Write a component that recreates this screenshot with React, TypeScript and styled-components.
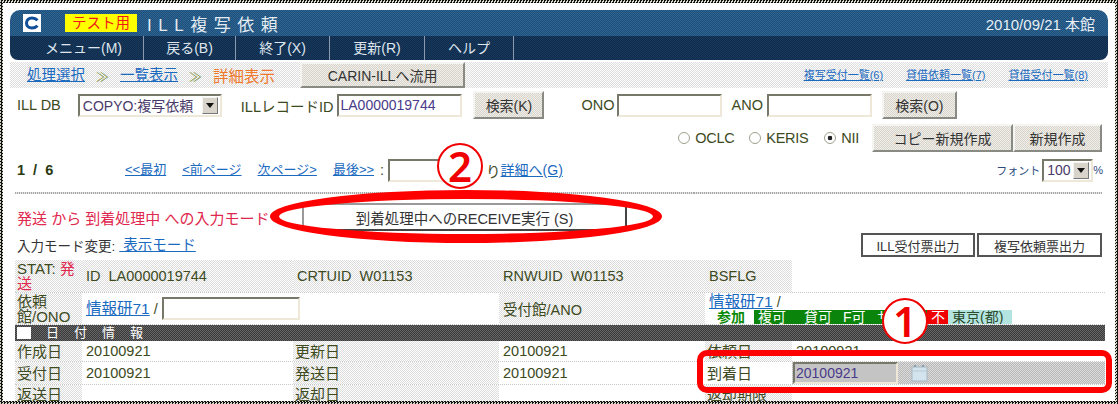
import React from "react";
import styled, { createGlobalStyle } from "styled-components";

const dither = (a: string, b: string) =>
  `repeating-conic-gradient(${a} 0 25%, ${b} 0 50%) 0 0 / 2px 2px`;

const GlobalStyle = createGlobalStyle`
  html, body { margin: 0; padding: 0; background: #fff; }
  body {
    font-family: "Liberation Sans", "Noto Sans CJK JP", sans-serif;
    color: #3d4a1e;
  }
  * { box-sizing: border-box; }
`;

const Frame = styled.div`
  position: relative;
  width: 1118px;
  height: 404px;
  overflow: hidden;
  border: 3px solid transparent;
  padding: 7px 13px 0 12px;
  background:
    linear-gradient(#fff, #fff) padding-box,
    repeating-conic-gradient(#111 0 25%, #d8d8c8 0 50%) 0 0 / 3px 3px border-box;
`;

const Header = styled.header`
  margin: 0 -6px 0 -5px;
  height: 50px;
  border-radius: 10px 10px 8px 8px;
  overflow: hidden;
`;

const TitleBar = styled.div`
  height: 26px;
  display: flex;
  align-items: center;
  padding: 0 10px 0 13px;
  background: ${dither("#1d4f7c", "#2f6590")};
`;

const Logo = styled.svg`
  width: 18px;
  height: 18px;
  flex: none;
`;

const TestTag = styled.span`
  width: 72px;
  height: 18px;
  margin-left: 24px;
  background: #ffff00;
  color: #f01818;
  font-size: 14.5px;
  line-height: 18px;
  text-align: center;
`;

const Title = styled.span`
  margin-left: 10px;
  color: #e4ecf2;
  font-size: 17px;
  letter-spacing: 6.5px;
`;

const HeaderDate = styled.span`
  margin-left: auto;
  margin-right: 3px;
  color: #e8eef4;
  font-size: 15px;
`;

const MenuBar = styled.nav`
  height: 24px;
  display: flex;
  background: ${dither("#0e2a4c", "#1a3a5c")};
`;

const MenuItem = styled.span<{ $w: number; $pad?: number }>`
  width: ${(p) => p.$w}px;
  padding-left: ${(p) => p.$pad ?? 0}px;
  border-right: 1px solid #8a9bb0;
  color: #dfe6ee;
  font-size: 14px;
  line-height: 24px;
  text-align: center;
`;

const Crumbs = styled.div`
  position: relative;
  display: flex;
  align-items: center;
  height: 26px;
  margin: 2px -6px 0 -5px;
  padding-left: 17px;
  background: ${dither("#dcdcdc", "#ffffff")};
`;

const Link = styled.a<{ $size?: number }>`
  color: #1a6ac0;
  text-decoration: underline;
  font-size: ${(p) => p.$size ?? 13}px;
  line-height: 16px;
  white-space: nowrap;
`;

const Chevron = styled.span`
  margin: 0 11px;
  color: #8a9a50;
  font-size: 13px;
`;

const CurrentCrumb = styled.span`
  color: #f0782a;
  font-size: 15.5px;
`;

const RaisedButton = styled.button<{ $w: number; $h?: number; $ml?: number }>`
  flex: none;
  width: ${(p) => p.$w}px;
  height: ${(p) => p.$h ?? 28}px;
  margin-left: ${(p) => p.$ml ?? 0}px;
  padding: 0;
  border: 2px solid;
  border-color: #f4f4f0 #8a8a84 #8a8a84 #f4f4f0;
  background: ${dither("#d8d4cc", "#f0eee8")};
  color: #333;
  font-family: inherit;
  font-size: 14px;
`;

const CrumbLinks = styled.div`
  display: flex;
  gap: 23px;
  margin-left: auto;
  padding-right: 20px;
`;

const Row = styled.div<{ $h: number; $mt?: number; $end?: boolean }>`
  display: flex;
  align-items: center;
  height: ${(p) => p.$h}px;
  margin-top: ${(p) => p.$mt ?? 0}px;
  justify-content: ${(p) => (p.$end ? "flex-end" : "flex-start")};
  font-size: 13px;
`;

const FieldLabel = styled.span<{ $ml?: number }>`
  margin-left: ${(p) => p.$ml ?? 0}px;
  font-size: 14.5px;
  white-space: nowrap;
`;

const TextBox = styled.input<{ $w: number; $ml?: number; $h?: number; $grey?: boolean }>`
  flex: none;
  width: ${(p) => p.$w}px;
  height: ${(p) => p.$h ?? 23}px;
  margin-left: ${(p) => p.$ml ?? 0}px;
  padding: 0 1px;
  border: 2px solid;
  border-color: #77776a #eee8d8 #eee8d8 #77776a;
  background: ${(p) => (p.$grey ? "#c4c4c4" : "#fff")};
  color: #4a3a8a;
  font-family: inherit;
  font-size: 14px;
  outline: none;
`;

const SelectBox = styled.div<{ $w: number; $ml?: number }>`
  flex: none;
  display: flex;
  align-items: center;
  justify-content: space-between;
  width: ${(p) => p.$w}px;
  height: 23px;
  margin-left: ${(p) => p.$ml ?? 0}px;
  padding: 0 2px 0 3px;
  border: 2px solid;
  border-color: #77776a #eee8d8 #eee8d8 #77776a;
  color: #4a3a6a;
  font-size: 14px;
  white-space: nowrap;
`;

const SelectArrow = styled.span`
  flex: none;
  width: 16px;
  height: 17px;
  display: flex;
  align-items: center;
  justify-content: center;
  border: 1px solid;
  border-color: #f4f4f0 #777 #777 #f4f4f0;
  background: #d8d4cc;
  &::after {
    content: "";
    border: 4px solid transparent;
    border-top: 5px solid #111;
    border-bottom: 0;
  }
`;

const Radio = styled.span<{ $on?: boolean; $ml?: number }>`
  flex: none;
  width: 12px;
  height: 12px;
  margin: 0 5px 0 ${(p) => p.$ml ?? 0}px;
  border: 1px solid #a0a090;
  border-radius: 50%;
  background: ${(p) =>
    p.$on ? "radial-gradient(circle, #222 0 2px, #fff 2.6px)" : "#fff"};
`;

const RadioText = styled.span`
  font-size: 14.5px;
  letter-spacing: -0.3px;
`;

const ButtonJoin = styled.div`
  display: flex;
  margin-left: 13px;
`;

const PageCount = styled.span`
  width: 110px;
  padding-left: 2px;
  color: #2a3a10;
  font-size: 14.5px;
  font-weight: bold;
  letter-spacing: 2px;
`;

const PageLinks = styled.div`
  display: flex;
  gap: 16px;
`;

const FontPicker = styled.div`
  display: flex;
  align-items: center;
  margin-left: auto;
  margin-right: -1px;
  color: #2a4a80;
  font-size: 11px;
`;

const Rule = styled.hr`
  height: 0;
  margin: 8px 0 0;
  border: 0;
  border-top: 2px solid;
  border-image: repeating-linear-gradient(90deg, #a8a8a8 0 1px, #e4e4e4 1px 2px) 2;
`;

const ModeText = styled.span`
  width: 287px;
  padding-left: 2px;
  color: #e0284e;
  font-size: 15px;
  white-space: nowrap;
`;

const ExecButton = styled.button`
  width: 325px;
  height: 28px;
  padding: 0;
  border: 2px solid;
  border-color: #9a9a9a #444 #444 #9a9a9a;
  background: #fff;
  color: #333;
  font-family: inherit;
  font-size: 14.5px;
`;

const ModeChangeLabel = styled.span`
  margin-right: 4px;
  padding-left: 2px;
  color: #333;
  font-size: 13.5px;
`;

const PrintGroup = styled.div`
  display: flex;
  gap: 2px;
  margin-left: auto;
`;

const PrintButton = styled.button<{ $w: number }>`
  width: ${(p) => p.$w}px;
  height: 24px;
  padding: 0;
  border: 2px solid #555;
  background: #fff;
  color: #333;
  font-family: inherit;
  font-size: 13px;
`;

const Table = styled.div`
  margin-top: 3px;
  width: 1090px;
`;

const TableRow = styled.div<{ $h: number }>`
  display: grid;
  grid-template-columns: 67px 211px 206px 206px 87px 313px;
  height: ${(p) => p.$h}px;
  border-bottom: 1px dotted #c8c8c8;
`;

const Cell = styled.div<{ $tone?: "label" | "value" | "hot"; $span?: number }>`
  grid-column: span ${(p) => p.$span ?? 1};
  display: flex;
  align-items: center;
  overflow: hidden;
  padding-left: ${(p) => (p.$tone === "hot" ? 1 : 4)}px;
  font-size: 14.5px;
  background: ${(p) =>
    p.$tone === "label"
      ? dither("#dcdcdc", "#ffffff")
      : p.$tone === "hot"
        ? dither("#b8b8b8", "#dcdcdc")
        : "#fff"};
`;

const LabelText = styled.span`
  margin-left: -2px;
  font-size: 15px;
  line-height: 15px;
`;

const StatusText = styled.span`
  color: #e0284e;
`;

const BadgeCell = styled.div`
  display: flex;
  flex-direction: column;
  justify-content: flex-end;
  height: 31px;
  font-size: 14px;
`;

const BadgeTop = styled.div`
  display: flex;
  align-items: center;
  gap: 4px;
  height: 17px;
`;

const BadgeLine = styled.div`
  display: flex;
  height: 14px;
  margin-left: 4px;
  white-space: nowrap;
`;

const Badge = styled.span<{ $kind: "join" | "ok" | "no" | "area"; $w: number }>`
  width: ${(p) => p.$w}px;
  height: 14px;
  padding-left: 4px;
  font-size: 14px;
  line-height: 14px;
  font-weight: ${(p) => (p.$kind === "join" ? "bold" : "normal")};
  color: ${(p) =>
    p.$kind === "join" ? "#0a8a0a" : p.$kind === "area" ? "#2a4a2a" : "#fff"};
  background: ${(p) =>
    p.$kind === "ok"
      ? "#0a840a"
      : p.$kind === "no"
        ? "#f00000"
        : p.$kind === "area"
          ? "#b4e4e0"
          : "#fff"};
`;

const SectionBar = styled.div`
  display: flex;
  align-items: center;
  gap: 15px;
  height: 16px;
  padding-left: 2px;
  background: ${dither("#3a3a3a", "#666666")};
  color: #fff;
  font-size: 13px;
  line-height: 16px;
`;

const SectionBox = styled.span`
  width: 14px;
  height: 12px;
  background: #fff;
`;

const CalendarIcon = styled.svg`
  width: 20px;
  height: 20px;
  margin-left: 12px;
`;

/* annotations laid over the screenshot */
const RedOval = styled.div`
  position: absolute;
  left: 267px;
  top: 187px;
  width: 392px;
  height: 53px;
  border: 9px solid #ff0000;
  border-radius: 50%;
`;

const RedBox = styled.div`
  position: absolute;
  left: 694px;
  top: 347px;
  width: 415px;
  height: 43px;
  border: 6px solid #ff0000;
  border-radius: 10px;
`;

const Marker = styled.div<{ $x: number; $y: number }>`
  position: absolute;
  left: ${(p) => p.$x}px;
  top: ${(p) => p.$y}px;
  width: 46px;
  height: 46px;
  border: 2px solid #f00000;
  border-radius: 50%;
  background: #fff;
  color: #f00000;
  font-family: "Noto Sans", sans-serif;
  font-size: 42px;
  font-weight: 600;
  line-height: 41px;
  text-align: center;
`;

const menu: [string, number, number?][] = [
  ["メニュー(M)", 134, 14],
  ["戻る(B)", 92],
  ["終了(X)", 94],
  ["更新(R)", 95],
  ["ヘルプ", 89],
];

export default function App() {
  return (
    <>
      <GlobalStyle />
      <Frame>
        <Header>
          <TitleBar>
            <Logo viewBox="0 0 18 18">
              <rect width="18" height="18" fill="#fff" />
              <path
                d="M14.500 6.200C13 4.600 11 4 9 4 5.800 4 3.500 6 3.500 9s2.300 5 5.500 5c2 0 4-.6 5.500-2.200"
                fill="none"
                stroke="#0f4f9a"
                strokeWidth="3"
              />
            </Logo>
            <TestTag>テスト用</TestTag>
            <Title>ILL複写依頼</Title>
            <HeaderDate>2010/09/21 本館</HeaderDate>
          </TitleBar>
          <MenuBar>
            {menu.map(([label, w, pad]) => (
              <MenuItem key={label} $w={w} $pad={pad}>
                {label}
              </MenuItem>
            ))}
          </MenuBar>
        </Header>

        <Crumbs>
          <Link $size={14.5}>処理選択</Link>
          <Chevron>≫</Chevron>
          <Link $size={14.5}>一覧表示</Link>
          <Chevron>≫</Chevron>
          <CurrentCrumb>詳細表示</CurrentCrumb>
          <RaisedButton $w={165} $h={26} $ml={25}>
            CARIN-ILLへ流用
          </RaisedButton>
          <CrumbLinks>
            <Link $size={11}>複写受付一覧(6)</Link>
            <Link $size={11}>貸借依頼一覧(7)</Link>
            <Link $size={11}>貸借受付一覧(8)</Link>
          </CrumbLinks>
        </Crumbs>

        <Row $h={28} $mt={3}>
          <FieldLabel $ml={2}>ILL DB</FieldLabel>
          <SelectBox $w={144} $ml={17}>
            COPYO:複写依頼
            <SelectArrow />
          </SelectBox>
          <FieldLabel $ml={19}>ILLレコードID</FieldLabel>
          <TextBox $w={125} $ml={4} defaultValue="LA0000019744" />
          <RaisedButton $w={71} $ml={11}>
            検索(K)
          </RaisedButton>
          <FieldLabel $ml={37}>ONO</FieldLabel>
          <TextBox $w={105} $ml={2} />
          <FieldLabel $ml={10}>ANO</FieldLabel>
          <TextBox $w={105} $ml={4} />
          <RaisedButton $w={75} $ml={10}>
            検索(O)
          </RaisedButton>
        </Row>

        <Row $h={28} $mt={5} $end>
          <Radio />
          <RadioText>OCLC</RadioText>
          <Radio $ml={15} />
          <RadioText>KERIS</RadioText>
          <Radio $on $ml={16} />
          <RadioText>NII</RadioText>
          <ButtonJoin>
            <RaisedButton $w={141}>コピー新規作成</RaisedButton>
            <RaisedButton $w={89}>新規作成</RaisedButton>
          </ButtonJoin>
        </Row>

        <Row $h={28} $mt={4}>
          <PageCount>1 / 6</PageCount>
          <PageLinks>
            <Link>&lt;&lt;最初</Link>
            <Link>&lt;前ページ</Link>
            <Link>次ページ&gt;</Link>
            <Link>最後&gt;&gt;</Link>
          </PageLinks>
          <FieldLabel $ml={6}>:</FieldLabel>
          <TextBox $w={58} $ml={4} />
          <FieldLabel $ml={40}>り</FieldLabel>
          <Link $size={14}>詳細へ(G)</Link>
          <FontPicker>
            フォント
            <SelectBox $w={51} $ml={2}>
              100
              <SelectArrow />
            </SelectBox>
            %
          </FontPicker>
        </Row>

        <Rule />

        <Row $h={28} $mt={9}>
          <ModeText>発送 から 到着処理中 への入力モード</ModeText>
          <ExecButton>到着処理中へのRECEIVE実行 (S)</ExecButton>
        </Row>

        <Row $h={24} $mt={2}>
          <ModeChangeLabel>入力モード変更:</ModeChangeLabel>
          <Link $size={14.5}>&nbsp;表示モード</Link>
          <PrintGroup>
            <PrintButton $w={114}>ILL受付票出力</PrintButton>
            <PrintButton $w={125}>複写依頼票出力</PrintButton>
          </PrintGroup>
        </Row>

        <Table>
          <TableRow $h={33}>
            <Cell $tone="label">
              <LabelText>
                STAT: <StatusText>発送</StatusText>
              </LabelText>
            </Cell>
            <Cell $tone="label">ID&nbsp;&nbsp;LA0000019744</Cell>
            <Cell $tone="label">CRTUID&nbsp;&nbsp;W01153</Cell>
            <Cell $tone="label">RNWUID&nbsp;&nbsp;W01153</Cell>
            <Cell $tone="label">BSFLG</Cell>
            <Cell />
          </TableRow>
          <TableRow $h={32}>
            <Cell $tone="label">
              <LabelText>依頼館/ONO</LabelText>
            </Cell>
            <Cell $span={2}>
              <Link $size={15.5}>情報研71</Link>&nbsp;/&nbsp;
              <TextBox $w={138} $h={23} />
            </Cell>
            <Cell $tone="label">受付館/ANO</Cell>
            <Cell $span={2}>
              <BadgeCell>
                <BadgeTop>
                  <Link $size={15.5}>情報研71</Link>/
                </BadgeTop>
                <BadgeLine>
                  <Badge $kind="join" $w={41}>参加</Badge>
                  <Badge $kind="ok" $w={46}>複可</Badge>
                  <Badge $kind="ok" $w={39}>貸可</Badge>
                  <Badge $kind="ok" $w={34}>F可</Badge>
                  <Badge $kind="ok" $w={54}>サ可</Badge>
                  <Badge $kind="no" $w={21}>不</Badge>
                  <Badge $kind="area" $w={64}>東京(都)</Badge>
                </BadgeLine>
              </BadgeCell>
            </Cell>
          </TableRow>
          <SectionBar>
            <SectionBox />
            <span>日</span>
            <span>付</span>
            <span>情</span>
            <span>報</span>
          </SectionBar>
          <TableRow $h={21}>
            <Cell $tone="label">
              <LabelText>作成日</LabelText>
            </Cell>
            <Cell>20100921</Cell>
            <Cell $tone="label">
              <LabelText>更新日</LabelText>
            </Cell>
            <Cell>20100921</Cell>
            <Cell $tone="label">
              <LabelText>依頼日</LabelText>
            </Cell>
            <Cell>20100921</Cell>
          </TableRow>
          <TableRow $h={23}>
            <Cell $tone="label">
              <LabelText>受付日</LabelText>
            </Cell>
            <Cell>20100921</Cell>
            <Cell $tone="label">
              <LabelText>発送日</LabelText>
            </Cell>
            <Cell>20100921</Cell>
            <Cell>
              <LabelText>到着日</LabelText>
            </Cell>
            <Cell $tone="hot">
              <TextBox $w={105} $h={22} $grey defaultValue="20100921" />
              <CalendarIcon viewBox="0 0 20 20">
                <rect x="2" y="4" width="15" height="14" fill="#d4e4ee" stroke="#a8b8c4" />
                <path d="M5 4V2M13 4V2" stroke="#8aa0b0" strokeWidth="2" />
                <path d="M2 8h15" stroke="#b4c8d4" />
              </CalendarIcon>
            </Cell>
          </TableRow>
          <TableRow $h={20}>
            <Cell $tone="label">
              <LabelText>返送日</LabelText>
            </Cell>
            <Cell />
            <Cell $tone="label">
              <LabelText>返却日</LabelText>
            </Cell>
            <Cell />
            <Cell $tone="label">
              <LabelText>返却期限</LabelText>
            </Cell>
            <Cell />
          </TableRow>
        </Table>

        <RedOval />
        <RedBox />
        <Marker $x={434} $y={140}>2</Marker>
        <Marker $x={879} $y={295}>1</Marker>
      </Frame>
    </>
  );
}
